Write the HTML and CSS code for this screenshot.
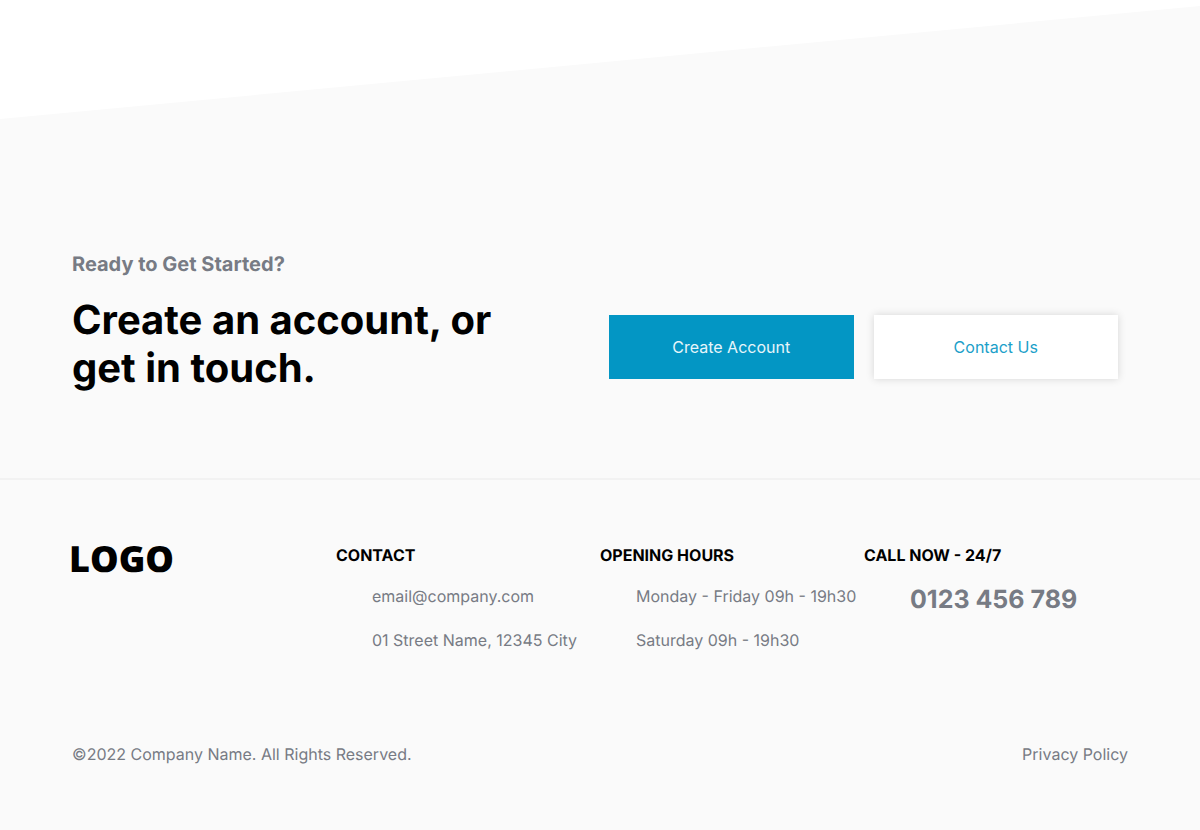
FILE: index.html
```html
<!DOCTYPE html>
<html lang="en">
<head>
<meta charset="utf-8">
<meta name="viewport" content="width=device-width, initial-scale=1">
<title>Company Name</title>
<link rel="stylesheet" href="styles.css">
</head>
<body>
<svg class="slope" viewBox="0 0 1200 119" preserveAspectRatio="none" aria-hidden="true"><path d="M0 0H1200V6L0 119Z" fill="#fff"/></svg>
<main class="cta">
  <div class="cta-text">
    <p class="eyebrow">Ready to Get Started?</p>
    <h1 class="title">Create an account, or get in touch.</h1>
  </div>
  <div class="actions">
    <button class="button button-primary" type="button">Create Account</button>
    <button class="button button-light" type="button">Contact Us</button>
  </div>
</main>
<footer class="footer">
  <div class="columns">
    <svg class="logo" width="104" height="28" viewBox="3 0 104 28" role="img" aria-label="Logo"><text x="0" y="27">LOGO</text></svg>
    <section>
      <h2 class="heading">CONTACT</h2>
      <ul class="list"><li>email@company.com</li><li>01 Street Name, 12345 City</li></ul>
    </section>
    <section>
      <h2 class="heading">OPENING HOURS</h2>
      <ul class="list"><li>Monday - Friday 09h - 19h30</li><li>Saturday 09h - 19h30</li></ul>
    </section>
    <section>
      <h2 class="heading">CALL NOW - 24/7</h2>
      <p class="phone">0123 456 789</p>
    </section>
  </div>
  <div class="legal">
    <p>©2022 Company Name. All Rights Reserved.</p>
    <a href="#">Privacy Policy</a>
  </div>
</footer>
</body>
</html>
```
FILE: styles.css
```css
* { box-sizing: border-box; }
body {
  margin: 0;
  background: #fafafa;
  color: #777b84;
  font: 16px/24px Inter, "Liberation Sans", sans-serif;
  text-rendering: geometricPrecision;
}
p, h1, h2, ul { margin: 0; padding: 0; }
ul { list-style: none; }
.slope { display: block; width: 100%; height: 119px; }
.cta {
  display: grid;
  grid-template-columns: 1fr 1fr;
  align-items: center;
  padding: 131px 72px 86px;
}
.eyebrow { font-size: 20px; line-height: 28px; font-weight: 700; }
.title {
  max-width: 440px;
  margin-top: 18px;
  color: #000;
  font-size: 40px;
  line-height: 48px;
  font-weight: 700;
}
.actions {
  display: grid;
  grid-template-columns: 1fr 1fr;
  gap: 20px;
  padding: 51px 10px 0 9px;
}
.button {
  height: 64px;
  border: 0;
  font: inherit;
  cursor: pointer;
}
.button-primary { background: #0396c4; color: #e6f5fa; }
.button-light {
  background: #fff;
  color: #1ba0c9;
  box-shadow: 0 0 8px rgba(0, 0, 0, 0.15);
}
.footer { border-top: 2px solid #f2f2f2; padding: 63px 72px; }
.columns { display: grid; grid-template-columns: repeat(4, 1fr); }
.logo {
  display: block;
  margin-top: 2px;
  overflow: visible;
  fill: #000;
  font: 800 36px/30px "Open Sans", sans-serif;
}
.heading { color: #000; font-size: 16px; line-height: 24px; font-weight: 700; }
.list {
  display: grid;
  gap: 20px;
  padding: 17px 0 0 36px;
  white-space: nowrap;
}
.phone {
  padding: 15px 0 0 46px;
  font-size: 25px;
  line-height: 36px;
  font-weight: 700;
}
.legal {
  display: flex;
  justify-content: space-between;
  padding-top: 90px;
}
.legal a { color: inherit; text-decoration: none; }
```
